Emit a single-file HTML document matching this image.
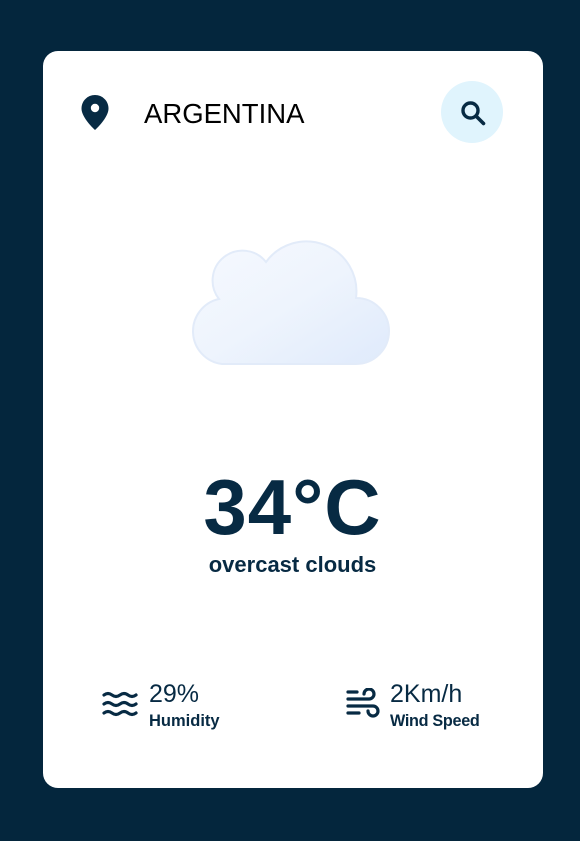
<!DOCTYPE html>
<html><head><style>
body{margin:0;width:580px;height:841px;background:#04263d;font-family:"Liberation Sans",sans-serif;position:relative;overflow:hidden;color:#072a43}
.card{position:absolute;left:43px;top:51px;width:500px;height:737px;background:#fff;border-radius:15px}
.a{position:absolute}
</style></head><body>
<div class="card"></div>
<svg class="a" style="left:80px;top:94px" width="30" height="36" viewBox="0 0 30 36"><path d="M15 1C7.5 1 1.5 7 1.5 14.5C1.5 24 15 36 15 36S28.5 24 28.5 14.5C28.5 7 22.5 1 15 1Z" fill="#072a43"/><circle cx="15" cy="14" r="4.2" fill="#fff"/></svg>
<div class="a" style="left:144px;top:98px;font-size:27.5px;color:#000">ARGENTINA</div>
<div class="a" style="left:441px;top:81px;width:62px;height:62px;border-radius:50%;background:#e0f4fd"></div>
<svg class="a" style="left:457px;top:97px" width="32" height="32" viewBox="0 0 32 32"><circle cx="13.5" cy="13.5" r="7.5" fill="none" stroke="#072a43" stroke-width="3.4"/><line x1="19.5" y1="19.5" x2="26.5" y2="26.5" stroke="#072a43" stroke-width="3.6" stroke-linecap="round"/></svg>
<svg class="a" style="left:0;top:0" width="580" height="841"><defs><linearGradient id="g" x1="0" y1="0" x2="1" y2="1"><stop offset="0" stop-color="#f6f9fe"/><stop offset="0.5" stop-color="#eef4fd"/><stop offset="1" stop-color="#dfeafb"/></linearGradient></defs>
<path d="M222,364 A33,33 0 0 1 219,299 A29,29 0 0 1 266,262 A50,50 0 0 1 356,298 A33,33 0 0 1 356,364 Z" fill="url(#g)" stroke="#e2ebf9" stroke-width="2"/></svg>
<div class="a" style="left:0;width:585px;top:462px;text-align:center;font-size:78px;font-weight:bold;letter-spacing:1px">34°C</div>
<div class="a" style="left:0;width:585px;top:552px;text-align:center;font-size:22px;font-weight:bold">overcast clouds</div>
<svg class="a" style="left:101px;top:690px" width="40" height="30" viewBox="0 0 40 30" fill="none" stroke="#072a43" stroke-width="3.2" stroke-linecap="round"><path d="M3 5q4-3 8 0t8 0t8 0t8 0"/><path d="M3 14q4-3 8 0t8 0t8 0t8 0"/><path d="M3 23q4-3 8 0t8 0t8 0t8 0"/></svg>
<div class="a" style="left:149px;top:680px;font-size:25px">29%</div>
<div class="a" style="left:149px;top:712px;font-size:16.5px;font-weight:bold">Humidity</div>
<svg class="a" style="left:345px;top:688px" width="36" height="34" viewBox="0 0 36 34" fill="none" stroke="#072a43" stroke-width="3.2" stroke-linecap="round"><path d="M3 11H24a5 5 0 1 0-5-5"/><path d="M3 18H28a5 5 0 1 1-5 5"/><path d="M3 25H14"/><path d="M3 4H12"/></svg>
<div class="a" style="left:390px;top:680px;font-size:25px">2Km/h</div>
<div class="a" style="left:390px;top:712px;font-size:16.2px;font-weight:bold;letter-spacing:-0.3px">Wind Speed</div>
</body></html>
